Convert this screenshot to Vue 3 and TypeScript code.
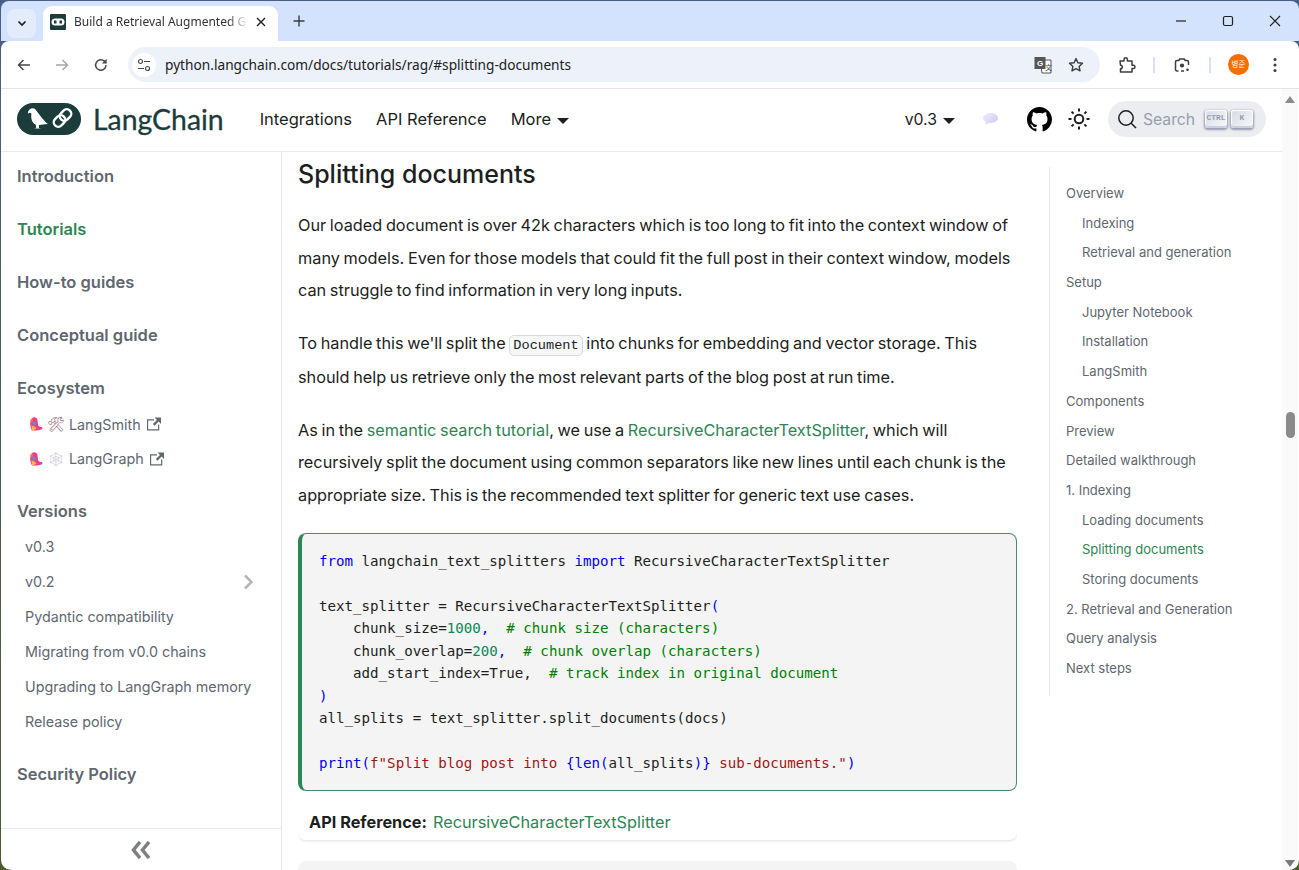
<script setup lang="ts">
type Seg = { t: string; c?: string };

const sideMain = ['Introduction', 'Tutorials', 'How-to guides', 'Conceptual guide', 'Ecosystem'];
const versions = ['v0.3', 'v0.2', 'Pydantic compatibility', 'Migrating from v0.0 chains', 'Upgrading to LangGraph memory', 'Release policy'];

const ecosystem = [
  { label: 'LangSmith', glyph: '🛠', cls: 'hammer' },
  { label: 'LangGraph', glyph: '🕸', cls: 'web' },
];

const toc = [
  { label: 'Overview' },
  { label: 'Indexing', sub: true },
  { label: 'Retrieval and generation', sub: true },
  { label: 'Setup' },
  { label: 'Jupyter Notebook', sub: true },
  { label: 'Installation', sub: true },
  { label: 'LangSmith', sub: true },
  { label: 'Components' },
  { label: 'Preview' },
  { label: 'Detailed walkthrough' },
  { label: '1. Indexing' },
  { label: 'Loading documents', sub: true },
  { label: 'Splitting documents', sub: true, active: true },
  { label: 'Storing documents', sub: true },
  { label: '2. Retrieval and Generation' },
  { label: 'Query analysis' },
  { label: 'Next steps' },
];

const code: Seg[][] = [
  [{ t: 'from', c: 'kw' }, { t: ' langchain_text_splitters ' }, { t: 'import', c: 'kw' }, { t: ' RecursiveCharacterTextSplitter' }],
  [],
  [{ t: 'text_splitter = RecursiveCharacterTextSplitter' }, { t: '(', c: 'kw' }],
  [{ t: '    chunk_size=' }, { t: '1000', c: 'num' }, { t: ',  ', c: 'kw' }, { t: '# chunk size (characters)', c: 'com' }],
  [{ t: '    chunk_overlap=' }, { t: '200', c: 'num' }, { t: ',  ', c: 'kw' }, { t: '# chunk overlap (characters)', c: 'com' }],
  [{ t: '    add_start_index=True,  ' }, { t: '# track index in original document', c: 'com' }],
  [{ t: ')', c: 'kw' }],
  [{ t: 'all_splits = text_splitter.split_documents(docs)' }],
  [],
  [{ t: 'print', c: 'kw' }, { t: '(', c: 'kw' }, { t: 'f"Split blog post into ', c: 'str' }, { t: '{', c: 'kw' }, { t: 'len', c: 'kw' }, { t: '(', c: 'kw' }, { t: 'all_splits' }, { t: ')', c: 'kw' }, { t: '}', c: 'kw' }, { t: ' sub-documents."', c: 'str' }, { t: ')', c: 'kw' }],
];
</script>

<template>
  <div class="window">
    <div class="tabstrip">
      <button class="tab-search">
        <svg width="12" height="12" viewBox="0 0 12 12"><path d="M2.5 4.5 6 8l3.5-3.5" fill="none" stroke="#1f1f1f" stroke-width="1.7" /></svg>
      </button>
      <div class="tab">
        <svg class="favicon" width="16" height="16" viewBox="0 0 16 16">
          <rect width="16" height="16" rx="1" fill="#1c3c3c" />
          <rect x="1.5" y="4.5" width="13" height="7" rx="3.5" fill="#fff" />
          <path d="M4 6.5h2.5v3H4zM9.5 6.5H12v3H9.5z" fill="#1c3c3c" />
        </svg>
        <span class="tab-title">Build a Retrieval Augmented G</span>
        <svg class="tab-x" width="10" height="10" viewBox="0 0 10 10"><path d="M1 1l8 8M9 1 1 9" stroke="#1f1f1f" stroke-width="1.4" /></svg>
      </div>
      <svg class="new-tab" width="12" height="12" viewBox="0 0 12 12"><path d="M6 0.5v11M0.5 6h11" stroke="#3c3c3c" stroke-width="1.4" /></svg>
      <div class="win-ctrls">
        <svg width="12" height="12" viewBox="0 0 12 12"><path d="M1 6h10" stroke="#1f1f1f" stroke-width="1.2" /></svg>
        <svg width="12" height="12" viewBox="0 0 12 12"><rect x="1.5" y="1.5" width="9" height="9" rx="1.5" fill="none" stroke="#1f1f1f" stroke-width="1.2" /></svg>
        <svg width="12" height="12" viewBox="0 0 12 12"><path d="M1 1l10 10M11 1 1 11" stroke="#1f1f1f" stroke-width="1.1" /></svg>
      </div>
    </div>

    <div class="toolbar">
      <svg class="tb-btn" width="16" height="16" viewBox="0 0 16 16"><path d="M14 8H2.5M7.5 3 2.5 8l5 5" fill="none" stroke="#474747" stroke-width="1.5" /></svg>
      <svg class="tb-btn" width="16" height="16" viewBox="0 0 16 16"><path d="M2 8h11.5M8.5 3l5 5-5 5" fill="none" stroke="#a6a8ab" stroke-width="1.5" /></svg>
      <svg class="tb-btn" width="16" height="16" viewBox="0 0 16 16"><path d="M13 8a5.200 5.200 0 1 1-1.500-3.700L13 6" fill="none" stroke="#474747" stroke-width="1.500" /><path d="M13.600 1.800v4.800H8.900z" fill="#474747" /></svg>
      <div class="omnibox">
        <span class="site-info">
          <svg width="14" height="14" viewBox="0 0 14 14"><circle cx="3.500" cy="3.500" r="2" fill="none" stroke="#474747" stroke-width="1.200" /><path d="M7 3.500h6M1 10.500h6" stroke="#474747" stroke-width="1.200" /><circle cx="10.500" cy="10.500" r="2" fill="none" stroke="#474747" stroke-width="1.200" /></svg>
        </span>
        <span class="url">python.langchain.com/docs/tutorials/rag/#splitting-documents</span>
        <svg class="translate" width="18" height="18" viewBox="0 0 18 18">
          <path d="M6 4h11v13H8z" fill="#fff" stroke="#555" stroke-width="1" />
          <rect x="0.500" y="1" width="11" height="12" fill="#555" />
          <text x="3" y="10" font-size="8" font-weight="700" fill="#fff" font-family="Liberation Sans, sans-serif">G</text>
          <text x="11" y="14" font-size="7" fill="#444" font-family="Noto Sans CJK SC, sans-serif">文</text>
        </svg>
        <svg class="star" width="16" height="16" viewBox="0 0 16 16"><path d="M8 1.600l1.900 4.200 4.600.5-3.400 3.100.9 4.500L8 11.600l-4 2.300.9-4.500L1.500 6.300l4.600-.5z" fill="none" stroke="#3c3c3c" stroke-width="1.400" stroke-linejoin="round" /></svg>
      </div>
      <svg class="ext" width="18" height="18" viewBox="0 0 18 18"><path d="M2 5h4V3.500a1.700 1.700 0 0 1 3.400 0V5H14v4.200h1.300a1.700 1.700 0 0 1 0 3.400H14V16H2.500v-3.200a1.800 1.800 0 0 0 0-3.600z" fill="none" stroke="#3c3c3c" stroke-width="1.500" stroke-linejoin="round" /></svg>
      <i class="tb-sep"></i>
      <svg class="lens" width="16" height="16" viewBox="0 0 16 16"><path d="M4.500 14H3a1.500 1.500 0 0 1-1.500-1.500V5A1.500 1.500 0 0 1 3 3.500h1.800L5.800 2h4.400l1 1.500H13A1.500 1.500 0 0 1 14.500 5v3M7 14h3" fill="none" stroke="#3c3c3c" stroke-width="1.500" /><circle cx="8" cy="8.500" r="2.100" fill="#3c3c3c" /><circle cx="13.500" cy="12.800" r="1.300" fill="#3c3c3c" /></svg>
      <i class="tb-sep"></i>
      <span class="avatar">병준</span>
      <svg class="kebab" width="4" height="16" viewBox="0 0 4 16"><circle cx="2" cy="2.500" r="1.500" fill="#3c3c3c" /><circle cx="2" cy="8" r="1.500" fill="#3c3c3c" /><circle cx="2" cy="13.500" r="1.500" fill="#3c3c3c" /></svg>
    </div>

    <div class="page">
      <div class="content-col">
        <nav class="navbar">
          <div class="brand">
            <svg width="64" height="32" viewBox="0 0 64 32">
              <rect width="64" height="32" rx="16" fill="#1c3c3c" />
              <path d="M11 9C12 5.500 16 4 18.500 6.500L25 15c2 2.500 4 5 6 6l-5 .5-4 .5v3l2 .6h-7l2-.6v-3c-4-2-5.500-7-4.500-11.500-1.500-1-2.500-1-3.500.5z" fill="#fff" />
              <g transform="rotate(-45 45.500 15)" fill="none" stroke="#fff" stroke-width="2.400">
                <rect x="35" y="10.500" width="12.500" height="9" rx="4.500" />
                <rect x="43.500" y="10.500" width="12.500" height="9" rx="4.500" />
              </g>
            </svg>
            <span class="brand-name">LangChain</span>
          </div>
          <a class="nav-link nav-first">Integrations</a>
          <a class="nav-link">API Reference</a>
          <a class="nav-link">More<i class="caret"></i></a>
          <span class="nav-spacer"></span>
          <a class="nav-link version">v0.3<i class="caret"></i></a>
          <svg class="chat" width="17" height="14" viewBox="0 0 17 14">
            <defs>
              <linearGradient id="bubble" x1="0" y1="0" x2="1" y2="1"><stop offset="0" stop-color="#f1ecfb" /><stop offset="1" stop-color="#d3c4f0" /></linearGradient>
            </defs>
            <path d="M8.500 1C4.300 1 1 3.200 1 6c0 1.700 1.200 3.100 3 4l-.7 3 3.300-2.100c.6.100 1.300.1 1.900.1 4.200 0 7.500-2.200 7.500-5s-3.300-5-7.500-5z" fill="url(#bubble)" />
          </svg>
          <svg class="github" width="25" height="25" viewBox="0 0 16 16"><path fill="#000" d="M8 0C3.580 0 0 3.580 0 8c0 3.540 2.290 6.530 5.470 7.590.4.070.55-.17.550-.38 0-.19-.01-.82-.01-1.490-2.010.37-2.530-.49-2.690-.94-.09-.23-.48-.94-.82-1.130-.28-.15-.68-.52-.01-.53.630-.01 1.080.58 1.230.82.720 1.210 1.870.87 2.330.66.070-.52.280-.87.510-1.070-1.780-.2-3.640-.89-3.640-3.950 0-.87.310-1.590.820-2.150-.08-.2-.36-1.020.080-2.120 0 0 .67-.21 2.200.82.640-.18 1.320-.27 2-.27s1.360.09 2 .27c1.530-1.040 2.200-.82 2.200-.82.440 1.100.16 1.920.08 2.120.51.560.82 1.270.82 2.150 0 3.070-1.870 3.750-3.650 3.950.29.250.54.730.54 1.480 0 1.070-.01 1.930-.01 2.200 0 .21.150.46.550.38A8.010 8.010 0 0 0 16 8c0-4.420-3.580-8-8-8z" /></svg>
          <svg class="sun" width="24" height="24" viewBox="0 0 24 24"><circle cx="12" cy="12" r="4.300" fill="none" stroke="#1c1e21" stroke-width="2" /><path d="M12 1.500v3M12 19.500v3M1.500 12h3M19.500 12h3M4.600 4.600l2 2M17.400 17.400l2 2M4.600 19.400l2-2M17.400 6.600l2-2" stroke="#1c1e21" stroke-width="2" /></svg>
          <div class="search">
            <svg width="20" height="20" viewBox="0 0 20 20"><circle cx="9" cy="9" r="7.200" fill="none" stroke="#1c1e21" stroke-width="1.500" /><path d="M14.200 14.200 19 19" stroke="#1c1e21" stroke-width="1.500" /></svg>
            <span class="search-text">Search</span>
            <span class="keys"><kbd class="ctrl">CTRL</kbd><kbd>K</kbd></span>
          </div>
        </nav>

        <div class="columns">
          <aside class="sidebar">
            <div class="side-scroll">
              <a v-for="s in sideMain" :key="s" class="side-item" :class="{ active: s === 'Tutorials' }">{{ s }}</a>
              <a v-for="e in ecosystem" :key="e.label" class="side-sub">
                <svg class="parrot" width="14" height="16" viewBox="0 0 14 16">
                  <path d="M3 2C5 .5 8 1 8.500 4L9 9c.5 1.500 2 2 4 2l.5 2c-2.500 1.500-5.500 1.500-7.500 1.500H3C1 11 .5 5 3 2z" fill="#ec3f8c" />
                  <path d="M2.500 10C4 9.500 6 10.500 7.500 12.500L4 14.500H3z" fill="#f7b93e" />
                  <path d="M3.500 6C5 5 6.500 6.500 6.500 9 5.500 10 4 9.500 3.500 6z" fill="#3ba0e6" />
                  <path d="M1 4 3.500 3v3C2 6 1 5 1 4z" fill="#f08a24" />
                </svg>
                <span class="emoji" :class="e.cls">{{ e.glyph }}</span>{{ e.label }}
                <svg class="ext-link" width="14" height="14" viewBox="0 0 24 24"><path fill="currentColor" d="M21 13v10H0V4h12v2H2v15h17v-8h2zm3-12H13.012l4.035 4-6.977 7.070 2.828 2.828 6.977-7.070L24 12V1z" /></svg>
              </a>
              <a class="side-item versions">Versions</a>
              <a v-for="v in versions" :key="v" class="side-version">
                {{ v }}
                <svg v-if="v === 'v0.2'" width="10" height="16" viewBox="0 0 10 16"><path d="M2 1.500 8.500 8 2 14.500" fill="none" stroke="#b4b6ba" stroke-width="2.500" /></svg>
              </a>
              <a class="side-item security">Security Policy</a>
            </div>
            <div class="collapse">
              <svg width="22" height="18" viewBox="0 0 22 18"><path d="M10 1 3.500 9 10 17M19 1l-6.500 8 6.500 8" fill="none" stroke="#7d7f84" stroke-width="3.500" /></svg>
            </div>
          </aside>

          <main class="article">
            <h2>Splitting documents</h2>
            <p>Our loaded document is over 42k characters which is too long to fit into the context window of many models. Even for those models that could fit the full post in their context window, models can struggle to find information in very long inputs.</p>
            <p>To handle this we'll split the <code class="inline">Document</code> into chunks for embedding and vector storage. This should help us retrieve only the most relevant parts of the blog post at run time.</p>
            <p>As in the <a>semantic search tutorial</a>, we use a <a>RecursiveCharacterTextSplitter</a>, which will recursively split the document using common separators like new lines until each chunk is the appropriate size. This is the recommended text splitter for generic text use cases.</p>
            <div class="code-block">
              <div v-for="(line, i) in code" :key="i" class="code-line"><span v-for="(s, j) in line" :key="j" :class="s.c">{{ s.t }}</span></div>
            </div>
            <div class="api-ref"><b>API Reference:</b><a>RecursiveCharacterTextSplitter</a></div>
            <div class="next-block"></div>
          </main>

          <aside class="toc">
            <ul>
              <li v-for="t in toc" :key="t.label" :class="{ sub: t.sub, active: t.active }">{{ t.label }}</li>
            </ul>
          </aside>
        </div>
      </div>

      <div class="scrollbar">
        <i class="arrow up"></i>
        <div class="track"><i class="thumb"></i></div>
        <i class="arrow down"></i>
      </div>
    </div>
  </div>
</template>

<style>
html, body {
  margin: 0;
  height: 870px;
  overflow: hidden;
  background: #4c5a2c;
}
</style>

<style scoped>
.window {
  width: 1299px;
  height: 870px;
  display: flex;
  flex-direction: column;
  box-sizing: border-box;
  padding: 1px 0 0 1px;
  background: linear-gradient(#4a5f85, #4c5a2c);
  font-family: Inter, "Noto Sans CJK KR", sans-serif;
  overflow: hidden;
}
.tabstrip {
  height: 40px;
  background: #d3e3fd;
  border-radius: 8px 8px 0 0;
  display: flex;
  align-items: center;
  flex: none;
}
.tab-search {
  width: 29px;
  height: 29px;
  margin: 4px 0 0 6px;
  border: 0;
  padding: 0;
  border-radius: 8px;
  background: #e3ecfb;
  display: flex;
  align-items: center;
  justify-content: center;
}
.tab {
  width: 235px;
  height: 35px;
  margin: 5px 0 0 7px;
  box-sizing: border-box;
  padding: 0 12px 4px 7px;
  background: #fff;
  border-radius: 9px 9px 0 0;
  display: flex;
  align-items: center;
  gap: 8px;
  flex: none;
  align-self: flex-end;
}
.favicon { flex: none; }
.tab-title {
  flex: 1;
  overflow: hidden;
  white-space: nowrap;
  font-family: "Noto Sans", sans-serif;
  font-size: 12px;
  color: #303134;
  -webkit-mask-image: linear-gradient(90deg, #000 88%, transparent);
  mask-image: linear-gradient(90deg, #000 88%, transparent);
}
.tab-x { flex: none; }
.new-tab { margin: 0 0 0 15px; }
.win-ctrls {
  margin-left: auto;
  margin-right: 18px;
  display: flex;
  gap: 35px;
  align-items: center;
}
.toolbar {
  height: 48px;
  flex: none;
  background: #fff;
  border-bottom: 1px solid #e3e3e3;
  box-sizing: border-box;
  display: flex;
  align-items: center;
  border-radius: 8px 8px 0 0;
}
.tb-btn { flex: none; }
.tb-btn:nth-child(1) { margin-left: 15px; }
.tb-btn:nth-child(2) { margin-left: 22px; }
.tb-btn:nth-child(3) { margin-left: 23px; }
.omnibox {
  width: 972px;
  height: 35px;
  margin-left: 19px;
  border-radius: 18px;
  background: #edf2fa;
  display: flex;
  align-items: center;
  flex: none;
}
.site-info {
  width: 24px;
  height: 24px;
  margin-left: 4px;
  border-radius: 50%;
  background: #fff;
  display: flex;
  align-items: center;
  justify-content: center;
}
.url {
  margin-left: 9px;
  font-family: "Noto Sans", sans-serif;
  font-size: 13.700px;
  color: #202124;
}
.translate { margin-left: auto; }
.star { margin: 0 16px 0 16px; }
.ext { margin-left: 18px; flex: none; }
.tb-sep {
  width: 2px;
  height: 16px;
  background: #d3e3fd;
  flex: none;
}
.ext + .tb-sep { margin-left: 17px; }
.lens { margin-left: 19px; flex: none; }
.lens + .tb-sep { margin-left: 19px; }
.avatar {
  width: 21px;
  height: 21px;
  margin-left: 17px;
  border-radius: 50%;
  background: #f56f00;
  color: #fff;
  font-size: 7.500px;
  line-height: 21px;
  text-align: center;
  flex: none;
}
.kebab { margin-left: 24px; flex: none; }

.page {
  flex: 1;
  min-height: 0;
  display: flex;
  background: #fff;
  border-radius: 0 0 10px 10px;
  overflow: hidden;
}
.content-col {
  flex: 1;
  min-width: 0;
  display: flex;
  flex-direction: column;
}
.navbar {
  height: 63px;
  flex: none;
  box-sizing: border-box;
  border-bottom: 1px solid #e8e8e9;
  padding: 0 16px 2px 16px;
  display: flex;
  align-items: center;
  color: #1c1e21;
}
.brand {
  display: flex;
  align-items: center;
  gap: 12px;
}
.brand-name {
  font-family: Lato, Inter, sans-serif;
  font-size: 28.400px;
  line-height: 32px;
  color: #1c3c3c;
  -webkit-text-stroke: 0.3px #1c3c3c;
}
.nav-link {
  font-size: 16.500px;
  color: #1c1e21;
  margin-left: 24px;
  display: flex;
  align-items: center;
}
.nav-first { margin-left: 36px; }
.version { font-size: 15.800px; }
.caret {
  display: inline-block;
  margin-left: 6px;
  margin-top: 3px;
  border-style: solid;
  border-width: 6px 6px 0;
  border-color: #1c1e21 transparent transparent;
}
.nav-spacer { flex: 1; }
.chat { margin-left: 27px; flex: none; }
.github { margin-left: 28px; flex: none; }
.sun { margin-left: 15px; flex: none; }
.search {
  width: 158px;
  height: 36px;
  margin-left: 17px;
  box-sizing: border-box;
  padding: 0 13px 0 9px;
  border-radius: 18px;
  background: #ebedf0;
  display: flex;
  align-items: center;
  gap: 6px;
}
.search-text {
  font-size: 15.700px;
  color: #969faf;
}
.keys {
  margin-left: auto;
  display: flex;
  gap: 4px;
}
kbd {
  width: 22px;
  height: 18px;
  border-radius: 3px;
  background: linear-gradient(-225deg, #d5dbe4, #f8f8f8);
  box-shadow: inset 0 -2px 0 0 #cdcde6, inset 0 0 1px 1px #fff, 0 1px 2px 1px rgba(30, 35, 90, 0.4);
  font-family: "Liberation Mono", monospace;
  font-size: 8px;
  font-weight: 700;
  line-height: 16px;
  text-align: center;
  color: #969faf;
}
.columns {
  flex: 1;
  min-height: 0;
  display: flex;
}
.sidebar {
  width: 281px;
  flex: none;
  box-sizing: border-box;
  border-right: 1px solid #e8e8e9;
  display: flex;
  flex-direction: column;
}
.side-scroll {
  flex: 1;
  min-height: 0;
  padding: 9px 0 0 16px;
  display: flex;
  flex-direction: column;
}
.side-item {
  height: 53px;
  font-size: 16.500px;
  font-weight: 600;
  line-height: 30px;
  color: #606770;
  flex: none;
}
.side-item.active { color: #2e8555; }
.side-item:nth-child(5) { height: 34px; }
.side-sub {
  height: 34.500px;
  display: flex;
  align-items: center;
  font-size: 14.300px;
  color: #606770;
  flex: none;
  padding-left: 12px;
}
.parrot { margin-right: 4px; flex: none; }
.emoji { flex: none; }
.hammer, .web {
  width: 16px;
  margin-right: 6px;
  font-family: "DejaVu Sans", sans-serif;
  font-size: 14px;
  line-height: 16px;
  color: #8a6a72;
}
.web { color: #cfc9dc; }
.ext-link { margin-left: 6px; flex: none; }
.side-item.versions { margin-top: 20px; height: 33px; }
.side-version {
  height: 35px;
  display: flex;
  align-items: center;
  justify-content: space-between;
  padding: 0 28px 0 8px;
  font-size: 14.300px;
  color: #606770;
  white-space: nowrap;
  flex: none;
}
.side-item.security { margin-top: 20px; }
.collapse {
  height: 41px;
  flex: none;
  border-top: 1px solid #e8e8e9;
  display: flex;
  align-items: center;
  justify-content: center;
}
.article {
  width: 719px;
  flex: none;
  margin-left: 16px;
  color: #1c1e21;
  font-size: 16.300px;
  word-spacing: -0.950px;
  line-height: 32.500px;
  overflow: hidden;
}
h2 {
  margin: 6px 0 19px;
  font-size: 25px;
  line-height: 32px;
  font-weight: 500;
  word-spacing: 0;
}
p { margin: 0 0 20.500px; }
.article a { color: #2e8555; }
code.inline {
  font-family: "Liberation Mono", monospace;
  font-size: 13.600px;
  line-height: 29.500px;
  word-spacing: 0;
  background: #f6f7f8;
  border: 1px solid #d9d9d9;
  border-radius: 5px;
  padding: 2px 3px;
}
.code-block {
  height: 258px;
  box-sizing: border-box;
  margin-top: 21.500px;
  padding: 16px 20px 0 17px;
  background: #f4f4f4;
  border: 1px solid #4f8a68;
  border-left: 4px solid #2e8555;
  border-radius: 8px;
  font-family: "DejaVu Sans Mono", monospace;
  font-size: 14.150px;
  word-spacing: 0;
  line-height: 22.500px;
  color: #1c1e21;
}
.code-line {
  height: 22.500px;
  white-space: pre;
}
.kw { color: #0000ff; }
.num { color: #098658; }
.com { color: #008000; }
.str { color: #a31515; }
.api-ref {
  height: 49px;
  box-sizing: border-box;
  padding: 14px 11px 0;
  border-radius: 0 0 8px 8px;
  box-shadow: 0 1px 3px rgba(0, 0, 0, 0.12);
  display: flex;
  align-items: center;
  gap: 6px;
  word-spacing: 0;
}
.next-block {
  height: 60px;
  margin-top: 21px;
  border-radius: 8px 8px 0 0;
  background: #f4f4f4;
}
.toc {
  margin-left: 32px;
  flex: 1;
  min-width: 0;
}
.toc ul {
  list-style: none;
  margin: 15px 0 0;
  padding: 12px 16px;
  border-left: 1px solid #e8e8e9;
}
.toc li {
  height: 29.700px;
  font-size: 13px;
  line-height: 29.700px;
  color: #606770;
  white-space: nowrap;
}
.toc li.sub { padding-left: 16px; }
.toc li.active { color: #2e8555; }
.scrollbar {
  width: 16px;
  flex: none;
  margin-right: 1px;
  background: #fafafa;
  display: flex;
  flex-direction: column;
}
.arrow {
  height: 14px;
  flex: none;
  display: flex;
}
.arrow::before {
  content: "";
  margin: 4px auto 0;
  border-style: solid;
  border-color: transparent;
  border-width: 0 5px 7px;
  border-bottom-color: #8a8a8a;
}
.arrow.down::before {
  border-width: 7px 5px 0;
  border-color: #7a7a7a transparent transparent;
}
.track {
  flex: 1;
  padding-top: 309px;
}
.thumb {
  display: block;
  width: 9px;
  height: 26px;
  margin: 0 auto;
  border-radius: 5px;
  background: #8a8a8a;
}
</style>
